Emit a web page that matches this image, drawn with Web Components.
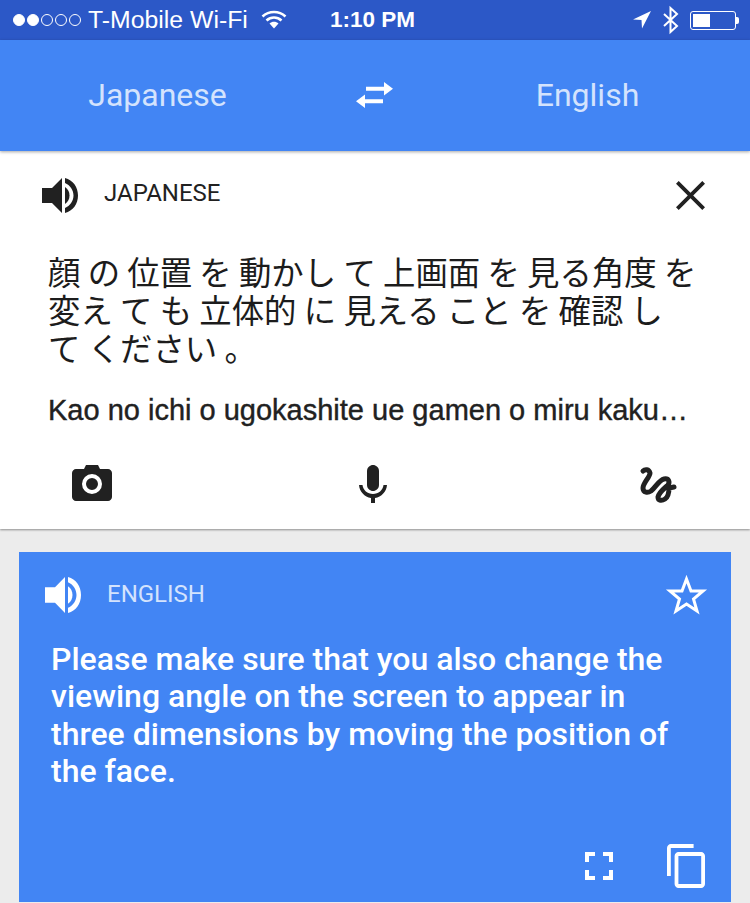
<!DOCTYPE html>
<html lang="en">
<head>
<meta charset="utf-8">
<title>Translate</title>
<style>
  html, body { margin: 0; padding: 0; }
  body { width: 750px; height: 903px; overflow: hidden; background: #ececec; font-family: Roboto, sans-serif; }
</style>
</head>
<body>
<status-bar></status-bar>
<lang-bar></lang-bar>
<input-card></input-card>
<result-card></result-card>

<script>
const ICONS = {
  speaker: '<path d="M0 10h10L20 0v35L10 25H0z"/><path d="M23 9c3 2 4.500 5 4.500 8.500S26 24 23 26z"/><path d="M23 0c8 2 13 9 13 17.500S31 33 23 35v-5c5-2 8.500-7 8.500-12.500S28 7 23 5z"/>',
  close: '<path d="M2.800 0L15 12.200 27.200 0 30 2.800 17.800 15 30 27.200 27.200 30 15 17.800 2.800 30 0 27.200 12.200 15 0 2.800z"/>',
  camera: '<path fill-rule="evenodd" d="M12 4l2-4h12l2 4h8c2 0 4 2 4 4v24c0 2-2 4-4 4H4c-2 0-4-2-4-4V8c0-2 2-4 4-4zM20 9a10 10 0 1 0 0 20a10 10 0 0 0 0-20zM20 13a6 6 0 1 1 0 12a6 6 0 0 1 0-12z"/>',
  mic: '<path d="M14 0c3 0 6 2.500 6 6v14c0 3.500-3 6-6 6s-6-2.500-6-6V6c0-3.500 3-6 6-6z"/><path d="M0 20h3.500c.5 5 5 9 10.500 9s10-4 10.500-9H28c-.5 6.500-5.500 12-12 13v5h-4v-5C5.500 32 .5 26.500 0 20z"/>',
  scribble: '<path fill="none" stroke="currentColor" stroke-width="5" stroke-linecap="round" stroke-linejoin="round" d="M3 4C5 2 9 2 10 6C10 10 3 16 3 21C3 26 8 26 11 24C15 21 19 13 24 12C29 11 30 15 28 18C25 21 19 25 18 30C18 34 22 34 25 32C28 30 29 25 29 21L34 20"/>',
  star: '<path fill="none" stroke="currentColor" stroke-width="3" stroke-linejoin="miter" d="M19.500 4l4.500 12h12l-9.500 8 3.500 12L19.500 29 9 36l3.500-12L3 16h12z"/>',
  expand: '<path d="M0 0h10v4H4v6H0zM18 0h10v10h-4V4h-6zM0 18h4v6h6v4H0zM24 18h4v10H18v-4h6z"/>',
  copy: '<path d="M0 32V4c0-2 2-4 4-4h24v4H4v28z"/><path fill-rule="evenodd" d="M12 8h24c2 0 4 2 4 4v28c0 2-2 4-4 4H12c-2 0-4-2-4-4V12c0-2 2-4 4-4zM12 12v28h24V12z"/>',
  swap: '<path d="M9 12L0 18.500 9 25v-4.500h18v-4H9z"/><path d="M28 0l9 6.500L28 13V8.500H10v-4h18z"/>',
  locate: '<path d="M18 0L0 8.500l8.500.5.5 8.500z"/>',
  bluetooth: '<path fill="none" stroke="currentColor" stroke-width="2" d="M1 7l13 12-6.500 6V1L14 7 1 19"/>'
};

// small inline svg wrapper, sized from the attributes
class UiIcon extends HTMLElement {
  connectedCallback() {
    const name = this.getAttribute('name');
    const vb = this.getAttribute('vb');
    const w = this.getAttribute('w');
    const h = this.getAttribute('h');
    this.attachShadow({mode: 'open'});
    this.shadowRoot.innerHTML = `
      <style>
        :host { display: block; width: ${w}px; height: ${h}px; flex: none; }
        svg { display: block; width: 100%; height: 100%; fill: currentColor; overflow: visible; }
      </style>
      <svg viewBox="${vb}" preserveAspectRatio="none">${ICONS[name]}</svg>`;
  }
}
customElements.define('ui-icon', UiIcon);

class StatusBar extends HTMLElement {
  constructor() {
    super();
    this.attachShadow({mode: 'open'});
    this.shadowRoot.innerHTML = `
      <style>
        :host {
          display: flex; align-items: center; box-sizing: border-box;
          height: 40px; padding: 0 0 0 13px; background: #2c58c7; color: #fff;
          font-family: "Liberation Sans", Arial, sans-serif; font-size: 24.800px;
        }
        .dots { display: flex; gap: 2px; }
        .dots i { display: block; box-sizing: border-box; width: 12px; height: 12px; border-radius: 50%; border: 1px solid #fff; }
        .dots i.on { background: #fff; }
        .carrier { margin-left: 7px; width: 163px; white-space: nowrap; }
        .wifi { margin-left: 10px; width: 26px; height: 20px; margin-top: -3px; }
        .time { margin-left: 43px; width: 90px; font-weight: bold; font-size: 22.500px; white-space: nowrap; }
        .right { margin-left: auto; display: flex; align-items: center; padding-right: 11px; }
        .batt { display: flex; align-items: center; margin-left: 12px; }
        .shell { box-sizing: border-box; width: 46px; height: 19px; border: 1px solid #fff; border-radius: 3px; padding: 2px; }
        .fill { width: 17px; height: 13px; background: #fff; }
        .tip { width: 3px; height: 7px; background: #fff; border-radius: 0 2px 2px 0; }
      </style>
      <div class="dots"><i class="on"></i><i class="on"></i><i></i><i></i><i></i></div>
      <span class="carrier">T-Mobile Wi-Fi</span>
      <svg class="wifi" viewBox="0 0 26 20"><path fill="none" stroke="#fff" stroke-width="2.600" d="M1.500 7.500c6.500-6 16.500-6 23 0M5.500 11.500c4.500-4 10.500-4 15 0"/><path fill="#fff" d="M8.500 14.500c2.500-2.300 6.500-2.300 9 0L13 19.500z"/></svg>
      <span class="time">1:10 PM</span>
      <div class="right">
        <ui-icon name="locate" vb="0 0 18 18" w="18" h="18"></ui-icon>
        <ui-icon name="bluetooth" vb="0 0 15 26" w="15" h="26" style="margin-left:12px"></ui-icon>
        <div class="batt"><div class="shell"><div class="fill"></div></div><div class="tip"></div></div>
      </div>`;
  }
}
customElements.define('status-bar', StatusBar);

class LangBar extends HTMLElement {
  constructor() {
    super();
    this.attachShadow({mode: 'open'});
    this.shadowRoot.innerHTML = `
      <style>
        :host {
          display: grid; grid-template-columns: 315px 117px 1fr; align-items: center;
          box-sizing: border-box; height: 111px; background: #4285f4; color: #fff;
          font-size: 32px; position: relative; z-index: 2;
          box-shadow: 0 1px 3px rgba(0,0,0,.35);
        }
        span { color: #d4e3fd; text-align: center; }
        .from { margin-top: -2px; }
        .to { margin-top: -2px; width: 311px; }
        ui-icon { margin-left: 41px; margin-top: -1px; }
      </style>
      <span class="from">Japanese</span>
      <ui-icon name="swap" vb="0 0 37 25" w="37" h="26"></ui-icon>
      <span class="to">English</span>`;
  }
}
customElements.define('lang-bar', LangBar);

class InputCard extends HTMLElement {
  constructor() {
    super();
    this.attachShadow({mode: 'open'});
    this.shadowRoot.innerHTML = `
      <style>
        :host {
          display: block; box-sizing: border-box; height: 378px; background: #fff; color: #212121;
          box-shadow: 0 1px 2px rgba(0,0,0,.4); position: relative; z-index: 1;
        }
        .head { display: flex; align-items: center; height: 84px; padding: 2px 45px 0 42px; }
        .label { margin-left: 26px; font-size: 24px; flex: 1; margin-top: -4px; }
        .source {
          margin: 15px 0 0; padding: 0 48px; font-size: 32.400px; font-weight: 400;
          color: #1c1c1c; font-family: "Noto Sans CJK JP", sans-serif; white-space: nowrap;
        }
        .source span { display: block; height: 38px; line-height: 38px; }
        .roman {
          margin: 28px 0 0; padding-left: 48px; font-family: "Liberation Sans", Arial, sans-serif;
          font-size: 29px; -webkit-text-stroke: .4px #212121; line-height: 32px; white-space: nowrap;
        }
        .tools { display: grid; grid-template-columns: 72px 40px 247px 28px 253px 36px; align-items: start; margin-top: 39px; }
        .tools .pen { margin-top: 2px; }
      </style>
      <div class="head">
        <ui-icon name="speaker" vb="0 0 36 35" w="36" h="35"></ui-icon>
        <span class="label">JAPANESE</span>
        <ui-icon name="close" vb="0 0 30 30" w="29" h="29"></ui-icon>
      </div>
      <p class="source" lang="ja"><span>顔 の 位置 を 動かし て 上画面 を 見る角度 を</span><span>変え て も 立体的 に 見える こと を 確認 し</span><span>て ください 。</span></p>
      <p class="roman">Kao no ichi o ugokashite ue gamen o miru kaku…</p>
      <div class="tools">
        <span></span>
        <ui-icon name="camera" vb="0 0 40 36" w="40" h="36"></ui-icon>
        <span></span>
        <ui-icon name="mic" vb="0 0 28 38" w="28" h="38"></ui-icon>
        <span></span>
        <ui-icon class="pen" name="scribble" vb="0 0 36 35" w="36" h="35"></ui-icon>
      </div>`;
  }
}
customElements.define('input-card', InputCard);

class ResultCard extends HTMLElement {
  constructor() {
    super();
    this.attachShadow({mode: 'open'});
    this.shadowRoot.innerHTML = `
      <style>
        :host {
          display: block; box-sizing: border-box; height: 350px; margin: 23px 19px 0; padding: 0 25px 0 26px;
          background: #4285f4; color: #fff;
        }
        .head { display: flex; align-items: center; height: 85px; }
        .label { margin-left: 26px; font-size: 24px; flex: 1; color: #d4e3fd; margin-top: -1px; }
        .text { margin: 4px 0 0; padding-left: 6px; font-size: 32px; font-weight: 500; line-height: 37.300px; white-space: nowrap; }
        .actions { display: flex; justify-content: flex-end; align-items: center; margin-top: 54px; padding-right: 1px; }
      </style>
      <div class="head">
        <ui-icon name="speaker" vb="0 0 36 35" w="36" h="36"></ui-icon>
        <span class="label">ENGLISH</span>
        <ui-icon name="star" vb="0 0 39 39" w="39" h="39"></ui-icon>
      </div>
      <p class="text">Please make sure that you also change the<br>viewing angle on the screen to appear in<br>three dimensions by moving the position of<br>the face.</p>
      <div class="actions">
        <ui-icon name="expand" vb="0 0 28 28" w="28" h="28"></ui-icon>
        <ui-icon name="copy" vb="0 0 40 44" w="38" h="44" style="margin-left:54px"></ui-icon>
      </div>`;
  }
}
customElements.define('result-card', ResultCard);
</script>
</body>
</html>
